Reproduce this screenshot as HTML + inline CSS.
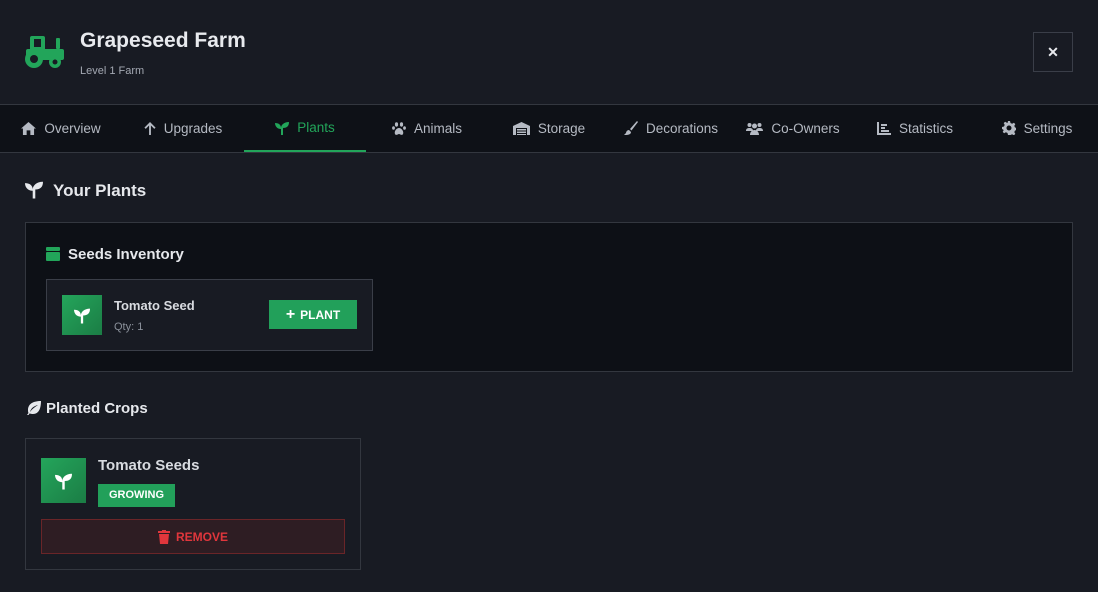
<!DOCTYPE html>
<html><head><meta charset="utf-8"><style>
*{box-sizing:border-box;margin:0;padding:0}
body{width:1098px;height:592px;background:#181b23;font-family:"Liberation Sans",sans-serif;color:#e6e8ec;overflow:hidden;position:relative}
.hdr{position:absolute;left:0;top:0;width:1098px;height:104px}
.title{position:absolute;left:80px;top:29px;font-size:21px;font-weight:bold;color:#e8eaee}
.sub{position:absolute;left:80px;top:65px;font-size:11px;color:#a3a8b2}
.close{position:absolute;left:1033px;top:32px;width:40px;height:40px;border:1px solid #3a3e48;color:#e8eaee;font-size:14px;font-weight:bold;text-align:center;line-height:38px}
.nav{position:absolute;left:0;top:104px;width:1098px;height:49px;background:#0e1117;border-top:1px solid #33373f;border-bottom:1px solid #33373f}
.tab{position:absolute;top:0;height:47px;width:122px;display:flex;align-items:center;justify-content:center;gap:8px;font-size:13.5px;color:#b5bac3;padding-bottom:1px}
.tab svg{fill:#b5bac3}
.tab.on{color:#22a55a;border-bottom:2px solid #22a55a;padding-bottom:0}
.tab.on svg{fill:#22a55a}
h2{position:absolute;left:53px;top:181px;font-size:17px;font-weight:bold;color:#e6e8ec}
.inv{position:absolute;left:25px;top:222px;width:1048px;height:150px;background:#0d1016;border:1px solid #33373f}
.card{position:absolute;left:46px;top:279px;width:327px;height:72px;background:#181b23;border:1px solid #3a3e48}
.ico{position:absolute;background:linear-gradient(135deg,#24a55b,#1b7d45);display:flex;align-items:center;justify-content:center}
.btn{position:absolute;left:269px;top:300px;width:88px;height:29px;background:#22a05a;color:#fff;font-size:12px;font-weight:bold;display:flex;align-items:center;justify-content:center;gap:5px}
.pc{position:absolute;left:25px;top:438px;width:336px;height:132px;border:1px solid #33373f}
.rm{position:absolute;left:41px;top:519px;width:304px;height:35px;background:#2e1d23;border:1px solid #6a2528;color:#e0363c;font-size:12px;font-weight:bold;display:flex;align-items:center;justify-content:center;gap:6px}
</style></head><body>
<div class="hdr">
<svg style="position:absolute;left:24px;top:35px" width="42" height="34" viewBox="0 0 42 34" fill="#22a55a"><rect x="6" y="1" width="15" height="15" rx="2"/><rect x="2" y="14" width="38" height="11" rx="2"/><rect x="32" y="3" width="4" height="11" rx="1"/><circle cx="10" cy="24" r="9"/><circle cx="10" cy="24" r="4" fill="#181b23"/><circle cx="31" cy="27" r="6"/><circle cx="31" cy="27" r="2.5" fill="#181b23"/><rect x="10" y="4" width="7" height="8" fill="#181b23"/></svg>
<div class="title">Grapeseed Farm</div>
<div class="sub">Level 1 Farm</div>
<div class="close">✕</div>
</div>
<div class="nav">
<div class="tab" style="left:0"><svg width="15" height="13" viewBox="0 0 16 14"><path d="M8 0L0 7h2v7h4V9h4v5h4V7h2z"/></svg>Overview</div>
<div class="tab" style="left:122px"><svg width="12" height="13" viewBox="0 0 12 14"><path d="M6 0L0 6l1.4 1.4L5 3.8V14h2V3.8l3.6 3.6L12 6z"/></svg>Upgrades</div>
<div class="tab on" style="left:244px"><svg width="14" height="14" viewBox="0 0 14 14"><path d="M6 14V8C2 8 0 5 0 2c4 0 6 2 6 5 0-3 3-6 8-6 0 4-2 6-6 6v7z"/></svg>Plants</div>
<div class="tab" style="left:366px"><svg width="14" height="13" viewBox="0 0 14 13"><ellipse cx="4.5" cy="2.5" rx="1.6" ry="2.2"/><ellipse cx="9.5" cy="2.5" rx="1.6" ry="2.2"/><ellipse cx="1.5" cy="6" rx="1.4" ry="1.8"/><ellipse cx="12.5" cy="6" rx="1.4" ry="1.8"/><path d="M7 6c-3 0-5 4-4 6s3 0 4 0 3 2 4 0-1-6-4-6z"/></svg>Animals</div>
<div class="tab" style="left:488px"><svg width="17" height="13" viewBox="0 0 17 13"><path d="M0 4L8.5 0 17 4v9h-3V6H3v7H0z"/><rect x="4" y="7" width="9" height="1.5"/><rect x="4" y="9.5" width="9" height="1.5"/><rect x="4" y="12" width="9" height="1"/></svg>Storage</div>
<div class="tab" style="left:610px"><svg width="14" height="14" viewBox="0 0 14 14"><path d="M13 0L6 8l1.5 1.5L14 1zM5 9c-2 0-3 2-3 3L0 14c3 0 7 0 7-3z"/></svg>Decorations</div>
<div class="tab" style="left:732px"><svg width="17" height="13" viewBox="0 0 17 13"><circle cx="3.5" cy="3" r="2"/><circle cx="13.5" cy="3" r="2"/><circle cx="8.5" cy="4" r="2.5"/><path d="M0 9c0-2 1-3 3.5-3S7 7 7 9zM10 9c0-2 1-3 3.5-3S17 7 17 9zM4 13c0-3 2-5 4.5-5S13 10 13 13z"/></svg>Co-Owners</div>
<div class="tab" style="left:854px"><svg width="14" height="13" viewBox="0 0 14 13"><path d="M0 0h2v11h12v2H0z"/><rect x="4" y="2" width="6" height="2"/><rect x="4" y="5" width="4" height="2"/><rect x="4" y="8" width="8" height="2"/></svg>Statistics</div>
<div class="tab" style="left:976px"><svg width="14" height="14" viewBox="0 0 14 14"><path d="M6 0h2l.5 2 1.6.7 1.8-1 1.4 1.4-1 1.8.7 1.6 2 .5v2l-2 .5-.7 1.6 1 1.8-1.4 1.4-1.8-1-1.6.7L8 14H6l-.5-2-1.6-.7-1.8 1-1.4-1.4 1-1.8L1 8.5 0 8V6l2-.5.7-1.6-1-1.8 1.4-1.4 1.8 1L5.5 2zM7 4.5a2.5 2.5 0 100 5 2.5 2.5 0 000-5z"/></svg>Settings</div>
</div>
<svg style="position:absolute;left:25px;top:180px" width="18" height="19" viewBox="0 0 14 14" fill="#e6e8ec"><path d="M6 14V8C2 8 0 5 0 2c4 0 6 2 6 5 0-3 3-6 8-6 0 4-2 6-6 6v7z"/></svg>
<h2>Your Plants</h2>
<div class="inv"></div>
<svg style="position:absolute;left:46px;top:247px" width="14" height="14" viewBox="0 0 14 14" fill="#22a55a"><rect x="0" y="0" width="14" height="4" rx="1"/><rect x="0" y="5" width="14" height="9" rx="1"/></svg>
<div style="position:absolute;left:68px;top:246px;font-size:15px;font-weight:bold">Seeds Inventory</div>
<div class="card"></div>
<div class="ico" style="left:62px;top:295px;width:40px;height:40px"><svg width="16" height="17" viewBox="0 0 14 14" fill="#fff"><path d="M6 14V8C2 8 0 5 0 2c4 0 6 2 6 5 0-3 3-6 8-6 0 4-2 6-6 6v7z"/></svg></div>
<div style="position:absolute;left:114px;top:298px;font-size:13px;font-weight:bold;color:#d8dbe0">Tomato Seed</div>
<div style="position:absolute;left:114px;top:321px;font-size:11px;color:#8a909a">Qty: 1</div>
<div class="btn"><span style="font-size:16px;font-weight:bold">+</span>PLANT</div>
<svg style="position:absolute;left:25px;top:401px" width="16" height="14" viewBox="0 0 16 14" fill="#e6e8ec"><path d="M16 0C8 0 3 3 3 9c0 1 0 2 .5 3L2 14h1.5l1.2-1.6C6 13 7 13 8 13c6 0 8-6 8-13zM5 11c1-4 4-6 8-7-3 2-6 4-8 7z"/></svg>
<div style="position:absolute;left:46px;top:400px;font-size:15px;font-weight:bold">Planted Crops</div>
<div class="pc"></div>
<div class="ico" style="left:41px;top:458px;width:45px;height:45px"><svg width="17" height="18" viewBox="0 0 14 14" fill="#fff"><path d="M6 14V8C2 8 0 5 0 2c4 0 6 2 6 5 0-3 3-6 8-6 0 4-2 6-6 6v7z"/></svg></div>
<div style="position:absolute;left:98px;top:457px;font-size:15px;font-weight:bold;color:#d8dbe0">Tomato Seeds</div>
<div style="position:absolute;left:98px;top:484px;width:77px;height:23px;background:#22a05a;color:#fff;font-size:11px;font-weight:bold;text-align:center;line-height:23px">GROWING</div>
<div class="rm"><svg width="12" height="14" viewBox="0 0 12 14" fill="#e0363c"><rect x="0" y="1" width="12" height="2"/><rect x="4" y="0" width="4" height="2"/><path d="M1 4h10l-1 10H2z"/></svg>REMOVE</div>
</body></html>
